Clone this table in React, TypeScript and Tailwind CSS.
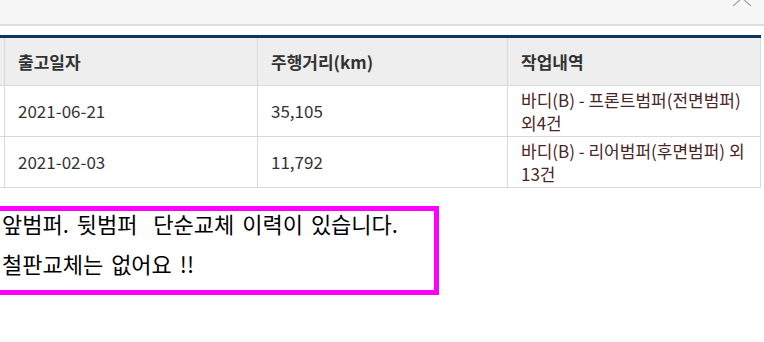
const rows = [
  { date: '2021-06-21', km: '35,105', work: ['바디(B) - 프론트범퍼(전면범퍼)', '외4건'] },
  { date: '2021-02-03', km: '11,792', work: ['바디(B) - 리어범퍼(후면범퍼) 외', '13건'] },
]

const cell = 'border-r border-b border-[#d9d9d9] flex items-center px-[13px]'

export default function App() {
  return (
    <div className="relative w-[764px] h-[342px] overflow-hidden bg-white text-[#333] font-['Noto_Sans_CJK_KR',sans-serif]">
      <div className="h-[26px] bg-[#f7f7f7] border-b-2 border-[#dedede]" />
      <svg className="absolute right-[10px] top-[-11px]" width="24" height="18" viewBox="0 0 24 18">
        <path d="M3 1 L21 17 M21 1 L3 17" stroke="#a8a8a8" strokeWidth="1.3" fill="none" />
      </svg>

      <div className="mt-[9px] w-[761px] border-t-[3px] border-[#0c3564]">
        <div className="grid grid-cols-[5px_253px_250px_253px] text-[17px]">
          <div className="bg-[#eeeeee] border-r border-b border-[#d9d9d9] h-[48px]" />
          <div className={`${cell} bg-[#eeeeee] font-bold`}>출고일자</div>
          <div className={`${cell} bg-[#eeeeee] font-bold`}>주행거리(km)</div>
          <div className={`${cell} bg-[#eeeeee] font-bold`}>작업내역</div>
          {rows.map((r) => (
            <>
              <div key={r.date + 'a'} className="border-r border-b border-[#d9d9d9] h-[51px]" />
              <div key={r.date + 'b'} className={cell}>{r.date}</div>
              <div key={r.date + 'c'} className={cell}>{r.km}</div>
              <div key={r.date + 'd'} className={`${cell} text-[#4a2626] leading-[23px] whitespace-nowrap`}>
                <div>
                  {r.work[0]}
                  <br />
                  {r.work[1]}
                </div>
              </div>
            </>
          ))}
        </div>
      </div>

      <div className="mt-[18px] ml-[-8px] w-[447px] h-[89px] border-[5px] border-[#ff00ff] pl-[5px] text-[22px] leading-[40px] text-black [word-spacing:3px]">
        <div className="-mt-[8px]">
          <div className="whitespace-pre">앞범퍼. 뒷범퍼  단순교체 이력이 있습니다.</div>
          <div>철판교체는 없어요 !!</div>
        </div>
      </div>
    </div>
  )
}
